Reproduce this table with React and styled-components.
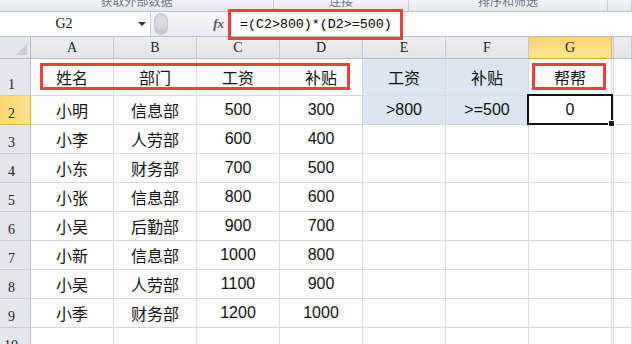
import React from 'react';
import styled, { createGlobalStyle } from 'styled-components';

const GlobalStyle = createGlobalStyle`
  html, body { margin: 0; padding: 0; background: #fff; overflow: hidden; }
  #root { width: 632px; height: 344px; overflow: hidden; }
`;

const CJK = `"Noto Sans CJK SC", "Liberation Sans", sans-serif`;
const MONO = `"Liberation Mono", "Noto Sans CJK SC", monospace`;
const SERIF = `"Liberation Serif", "Noto Sans CJK SC", serif`;

const Ribbon = styled.div`
  display: flex;
  height: 12px;
  box-sizing: border-box;
  border-bottom: 1px solid #b6bfca;
  background: linear-gradient(#f3f5f8, #e3e8ee);
  overflow: hidden;
`;

const RibbonGroup = styled.div`
  width: ${p => p.$w}px;
  flex: ${p => (p.$grow ? 1 : 'none')};
  box-sizing: border-box;
  border-right: 1px solid #c5ccd5;
  display: flex;
  justify-content: center;
  font: 12px/12px ${CJK};
  color: #6d7480;
  span { margin-top: -5px; }
`;

const FormulaBar = styled.div`
  display: flex;
  height: 25px;
  box-sizing: border-box;
  border-bottom: 1px solid #b6bfca;
  background: linear-gradient(#f6f8fa, #e9edf2);
`;

const NameBox = styled.div`
  width: 151px;
  box-sizing: border-box;
  background: #fff;
  border-right: 1px solid #c9d0d8;
  display: flex;
  align-items: center;
  position: relative;
  font: 14px ${SERIF};
  color: #111;
  span { flex: 1; text-align: center; padding-right: 22px; }
`;

const DropArrow = styled.div`
  position: absolute;
  right: 4px;
  top: 10px;
  border-left: 4px solid transparent;
  border-right: 4px solid transparent;
  border-top: 4px solid #333;
`;

const Tools = styled.div`
  width: 77px;
  display: flex;
  align-items: center;
  justify-content: space-between;
  padding: 0 4px 0 3px;
  box-sizing: border-box;
`;

const Knob = styled.div`
  width: 12px;
  height: 20px;
  border-radius: 10px;
  background: radial-gradient(circle at 50% 40%, #d9dde2 35%, #c3c8cf 70%);
  border: 1px solid #c5cad1;
`;

const Fx = styled.span`
  font: italic bold 13px "Liberation Serif", serif;
  color: #555;
`;

const FormulaInput = styled.div`
  flex: 1;
  background: #fff;
  position: relative;
  display: flex;
  align-items: center;
  padding-left: 12px;
  font: 13.3px ${MONO};
  color: #000;
  white-space: nowrap;
`;

const RedBox = styled.div`
  position: absolute;
  left: ${p => p.$x}px;
  top: ${p => p.$y}px;
  width: ${p => p.$w}px;
  height: ${p => p.$h}px;
  border: 3px solid #f23d3d;
  box-sizing: border-box;
  pointer-events: none;
  z-index: 5;
`;

const Sheet = styled.div`
  display: grid;
  grid-template-columns: 31px repeat(7, 83px) 2px 1fr;
  grid-template-rows: 22px 37px repeat(10, 29px);
  position: relative;
`;

const Corner = styled.div`
  background: #e4e7eb;
  border-right: 1px solid #b9bec6;
  border-bottom: 1px solid #b9bec6;
  position: relative;
  &::after {
    content: '';
    position: absolute;
    right: 3px;
    bottom: 3px;
    border-left: 11px solid transparent;
    border-bottom: 11px solid #c9ccd1;
  }
`;

const ColHead = styled.div`
  box-sizing: border-box;
  background: ${p => (p.$active ? 'linear-gradient(#f9d46c, #fde597)' : 'linear-gradient(#eceef1, #e2e5e9)')};
  border-right: 1px solid ${p => (p.$active ? '#e1b04a' : '#c4c8ce')};
  border-bottom: 1px solid ${p => (p.$active ? '#e1a63a' : '#b9bec6')};
  display: flex;
  align-items: flex-end;
  justify-content: center;
  padding-bottom: 2px;
  font: 14px ${SERIF};
  color: #222;
`;

const RowHead = styled.div`
  box-sizing: border-box;
  background: ${p => (p.$active ? 'linear-gradient(90deg, #fbd66e, #fde38f)' : '#e4e7eb')};
  border-right: 1px solid ${p => (p.$active ? '#e1a63a' : '#b9bec6')};
  border-bottom: 1px solid ${p => (p.$active ? '#e1b04a' : '#c9cdd3')};
  display: flex;
  align-items: flex-end;
  padding: 0 0 2px ${p => (p.$wide ? 4 : 8)}px;
  font: 14px ${SERIF};
  color: #222;
`;

const Cell = styled.div`
  box-sizing: border-box;
  background: ${p => (p.$fill ? '#dce6f1' : '#fff')};
  border-right: 1px solid #d9d9d9;
  border-bottom: 1px solid #d9d9d9;
  display: flex;
  align-items: center;
  justify-content: center;
  font: 16px ${p => (p.$num ? `"Liberation Sans", ${CJK}` : CJK)};
  color: #111;
  white-space: nowrap;
`;

const Selection = styled.div`
  position: absolute;
  left: 527px;
  top: 57px;
  width: 86px;
  height: 31px;
  box-sizing: border-box;
  border: 2px solid #111;
  z-index: 6;
  &::after {
    content: '';
    position: absolute;
    right: -4px;
    bottom: -4px;
    width: 5px;
    height: 5px;
    background: #111;
    border: 1px solid #fff;
  }
`;

const rows = [
  ['姓名', '部门', '工资', '补贴', '工资', '补贴', '帮帮'],
  ['小明', '信息部', '500', '300', '>800', '>=500', '0'],
  ['小李', '人劳部', '600', '400'],
  ['小东', '财务部', '700', '500'],
  ['小张', '信息部', '800', '600'],
  ['小吴', '后勤部', '900', '700'],
  ['小新', '信息部', '1000', '800'],
  ['小吴', '人劳部', '1100', '900'],
  ['小季', '财务部', '1200', '1000'],
  [],
];

const cols = ['A', 'B', 'C', 'D', 'E', 'F', 'G'];

export default function App() {
  return (
    <>
      <GlobalStyle />
      <Ribbon>
        <RibbonGroup $w={274}><span>获取外部数据</span></RibbonGroup>
        <RibbonGroup $w={135}><span>连接</span></RibbonGroup>
        <RibbonGroup $w={199}><span>排序和筛选</span></RibbonGroup>
        <RibbonGroup $grow />
      </Ribbon>
      <FormulaBar>
        <NameBox><span>G2</span><DropArrow /></NameBox>
        <Tools><Knob /><Fx>fx</Fx></Tools>
        <FormulaInput>
          =(C2&gt;800)*(D2&gt;=500)
        </FormulaInput>
      </FormulaBar>
      <RedBox $x={228} $y={9} $w={175} $h={31} />
      <Sheet>
        <Corner />
        {cols.map(c => (
          <ColHead key={c} $active={c === 'G'}>{c}</ColHead>
        ))}
        <ColHead />
        <ColHead />
        {rows.map((r, i) => (
          <React.Fragment key={i}>
            <RowHead $active={i === 1} $wide={i >= 9}>{i + 1}</RowHead>
            {cols.map((c, j) => {
              const v = r[j] || '';
              const fill = (j === 4 || j === 5) && i < 2;
              return (
                <Cell key={c} $fill={fill} $num={/^[>=0-9]/.test(v)}>{v}</Cell>
              );
            })}
            <Cell />
            <Cell />
          </React.Fragment>
        ))}
        <RedBox $x={40} $y={26} $w={310} $h={27} />
        <RedBox $x={532} $y={26} $w={74} $h={27} />
        <Selection />
      </Sheet>
    </>
  );
}
